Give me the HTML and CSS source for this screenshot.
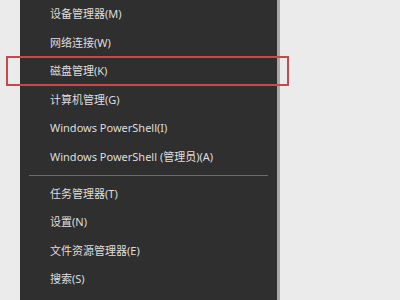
FILE: index.html
```html
<!DOCTYPE html>
<html>
<head>
<meta charset="UTF-8">
<title>Win+X 菜单</title>
<link rel="stylesheet" href="styles.css">
</head>
<body>
  <div class="screen">
    <div class="menu">
      <div class="item">设备管理器(M)</div>
      <div class="item">网络连接(W)</div>
      <div class="item">磁盘管理(K)</div>
      <div class="item">计算机管理(G)</div>
      <div class="item">Windows PowerShell(I)</div>
      <div class="item">Windows PowerShell (管理员)(A)</div>
      <div class="sep"></div>
      <div class="item">任务管理器(T)</div>
      <div class="item">设置(N)</div>
      <div class="item">文件资源管理器(E)</div>
      <div class="item">搜索(S)</div>
    </div>
    <div class="mark"></div>
  </div>
</body>
</html>
```

FILE: styles.css
```css
body {
  margin: 0;
  background: #ebebeb;
  font-family: "Noto Sans", "Noto Sans CJK SC", sans-serif;
}

.screen {
  position: relative;
  width: 400px;
  height: 300px;
  overflow: hidden;
  padding-left: 20px;
  box-sizing: border-box;
}

.menu {
  width: 257px;
  height: 300px;
  background: #2f2f2f;
  border-right: 3px solid #a9a9a9;
}

.item {
  height: 28.6px;
  line-height: 28.6px;
  padding-left: 30px;
  font-size: 11px;
  color: #dedede;
  white-space: nowrap;
}

.sep {
  height: 1px;
  margin: 3px 9px 4px 9px;
  background: #6c6c6c;
}

/* 红框标注 */
.mark {
  position: absolute;
  left: 6px;
  top: 56px;
  width: 279px;
  height: 26px;
  border: 2px solid #c8484b;
}
```
